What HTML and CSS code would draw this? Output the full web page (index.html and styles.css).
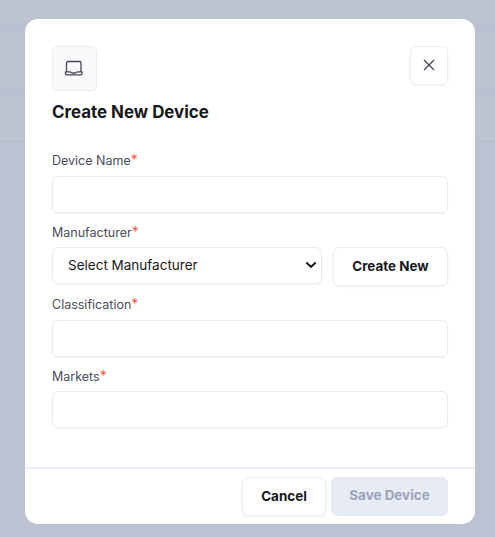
FILE: index.html
```html
<!DOCTYPE html>
<html lang="en">
<head>
<meta charset="utf-8">
<title>Create New Device</title>
<link rel="stylesheet" href="styles.css">
</head>
<body>
<main class="modal">
  <header class="head">
    <div class="badge">
      <svg width="20" height="20" viewBox="0 0 20 20" fill="none" stroke="#454752" stroke-width="1.3" stroke-linecap="round" stroke-linejoin="round"><path d="M2.5 12.5V4Q2.5 2.5 4 2.5H15.5Q17 2.5 17 4V12.5M1.5 12.8H6.4Q7.2 14 8.4 14H11.1Q12.3 14 13.1 12.8H18V14.8Q18 15.9 16.9 15.9H2.6Q1.5 15.9 1.5 14.8Z"/></svg>
    </div>
    <button class="btn close" type="button" aria-label="Close">
      <svg width="12" height="12" viewBox="0 0 12 12" fill="none" stroke="#3f4450" stroke-width="1.25"><path d="M1 1L11 11M11 1L1 11"/></svg>
    </button>
  </header>
  <h1>Create New Device</h1>
  <form class="fields">
    <div class="field">
      <label for="name">Device Name<span class="req">*</span></label>
      <input id="name" class="control" type="text">
    </div>
    <div class="field">
      <label for="maker">Manufacturer<span class="req">*</span></label>
      <div class="row">
        <div class="control select" id="maker">
          <span>Select Manufacturer</span>
          <svg width="12" height="8" viewBox="0 0 12 8" fill="none" stroke="#17181c" stroke-width="2"><path d="M1.3 1.5L6 5.8L10.7 1.5"/></svg>
        </div>
        <button class="btn create" type="button">Create New</button>
      </div>
    </div>
    <div class="field">
      <label for="class">Classification<span class="req">*</span></label>
      <input id="class" class="control" type="text">
    </div>
    <div class="field">
      <label for="markets">Markets<span class="req">*</span></label>
      <input id="markets" class="control last" type="text">
    </div>
  </form>
  <footer class="foot">
    <button class="btn cancel" type="button">Cancel</button>
    <button class="btn save" type="button" disabled>Save Device</button>
  </footer>
</main>
</body>
</html>
```
FILE: styles.css
```css
* { box-sizing: border-box; }
body {
  margin: 0;
  height: 537px;
  padding: 19.4px 20px 0 25px;
  overflow: hidden;
  font-family: Inter, sans-serif;
  background: linear-gradient(#bdc3d1 0 23px, #bbc1d1 23px 33px, #bdc3d1 33px 85px, #bbc1d1 85px 97px, #bdc3d1 97px 141px, #b4bacb 141px 142px, #bcc2d1 142px);
}
.modal {
  height: 505px;
  display: flex;
  flex-direction: column;
  border-radius: 13px;
  background: #fff;
}
.head {
  height: 73px;
  display: flex;
  justify-content: space-between;
  align-items: flex-start;
  padding: 27px 27px 0;
}
.badge {
  width: 45px;
  height: 45px;
  display: grid;
  place-items: center;
  border: 1px solid #e8ecf5;
  border-radius: 6px;
  background: #f9fafc;
}
.badge svg { margin-right: 1px; }
.btn {
  height: 38.5px;
  padding: 0 0 2px;
  border: 1px solid #e9edf5;
  border-radius: 6px;
  background: #fff;
  box-shadow: 0 1px 3px rgba(40, 55, 90, .06);
  color: #17181c;
  font: 700 13.45px/20px Inter, sans-serif;
}
.close {
  width: 38px;
  display: grid;
  place-items: center;
  padding-bottom: 1px;
}
h1 {
  margin: 9px 27px 0;
  font-size: 16.9px;
  line-height: 22px;
  font-weight: 700;
  color: #17181c;
}
.fields {
  flex: 1;
  display: flex;
  flex-direction: column;
  padding: 29px 27px 0;
}
.field { height: 72px; }
label {
  display: block;
  height: 24px;
  font-size: 12.5px;
  line-height: 18px;
  color: #4a4c59;
}
.req {
  display: inline-block;
  color: #f15b4b;
  font-size: 14px;
  line-height: 14px;
}
.control {
  display: block;
  width: 100%;
  height: 37px;
  border: 1px solid #e7ebf4;
  border-radius: 6px;
  background: #fff;
  box-shadow: 0 1px 2px rgba(40, 55, 90, .06);
}
.last { margin-top: -1px; }
.row { display: flex; gap: 11px; margin-top: -1px; }
.select {
  flex: 1;
  display: flex;
  align-items: center;
  justify-content: space-between;
  padding: 0 4px 2px 15px;
  font-size: 13.5px;
  color: #17181c;
}
.create { width: 115px; }
.foot {
  height: 57.5px;
  display: flex;
  justify-content: flex-end;
  gap: 5px;
  padding: 8.5px 27px 0;
  border-top: 2px solid #e9edf6;
}
.cancel { width: 84px; }
.save {
  width: 117px;
  padding-bottom: 4px;
  border-color: #e7ebf4;
  background: #e7ebf4;
  box-shadow: none;
  color: #9ca4b8;
}
```
